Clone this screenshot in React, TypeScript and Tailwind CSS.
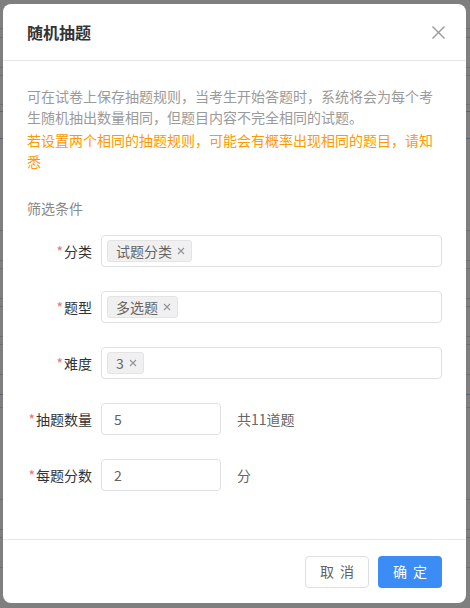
import React from 'react';

const font = { fontFamily: '"Noto Sans CJK SC", "Noto Sans", sans-serif' };

// faint rows of the table that sits behind the overlay
const pageLines = [29, 39, 70, 79, 109, 117, 145, 238, 269, 278, 309, 318, 349, 358, 389, 410, 424, 517, 548, 557, 588];

const Star = () => <span className="text-[#f56c6c] mr-px">*</span>;

const TagClose = () => (
  <svg width="8" height="8" viewBox="0 0 8 8" className="ml-[5px]">
    <path d="M1 1L7 7M7 1L1 7" stroke="#909399" strokeWidth="1.1" />
  </svg>
);

const Tag = ({ text }: { text: string }) => (
  <span className="inline-flex items-center h-[22px] pl-2 pr-[6px] bg-[#f0f0f0] border border-[#e4e4e4] rounded-[3px] text-[14px] text-[#666]">
    {text}
    <TagClose />
  </span>
);

const Row = ({ label, children }: { label: string; children: React.ReactNode }) => (
  <div className="flex items-center">
    <div className="w-[65px] shrink-0 text-right text-[14px] text-[#333]">
      <Star />
      {label}
    </div>
    <div className="ml-[9px] flex-1 flex items-center">{children}</div>
  </div>
);

export default function App() {
  let prev = 0;
  return (
    <div className="relative w-[470px] h-[608px] overflow-hidden bg-white" style={font}>
      {/* page behind */}
      <div className="flex flex-col">
        {pageLines.map((y, i) => {
          const h = y - prev;
          prev = y + 1;
          return (
            <div
              key={i}
              className={`border-b ${y === 410 || y === 145 || y === 117 ? 'border-[#b4c6e6]' : 'border-[#dcdcdc]'}`}
              style={{ height: h }}
            />
          );
        })}
      </div>

      {/* overlay */}
      <div className="absolute inset-0 bg-black/50 flex items-start justify-start pl-[3px] pt-[4px]">
        <div className="w-[463px] h-[599px] bg-white rounded-lg flex flex-col">
          {/* header */}
          <div className="h-[57px] shrink-0 flex items-center justify-between px-6 border-b border-[#e8e8e8]">
            <h2 className="text-[16px] font-bold text-[#333] leading-none">随机抽题</h2>
            <svg width="13" height="13" viewBox="0 0 13 13" className="mr-[-3px]">
              <path d="M0.5 0.5L12.5 12.5M12.5 0.5L0.5 12.5" stroke="#999" strokeWidth="1.4" />
            </svg>
          </div>

          {/* body */}
          <div className="flex-1 px-6 pt-[25px]">
            <p className="text-[14px] leading-[21px] text-[#9a9a9a]">
              可在试卷上保存抽题规则，当考生开始答题时，系统将会为每个考生随机抽出数量相同，但题目内容不完全相同的试题。
            </p>
            <p className="mt-[2px] text-[14px] leading-[21px] text-[#ff9900]">
              若设置两个相同的抽题规则，可能会有概率出现相同的题目，请知悉
            </p>

            <div className="mt-[26px] text-[14px] leading-[21px] text-[#888]">筛选条件</div>

            <div className="mt-[16px] flex flex-col gap-[24px]">
              <Row label="分类">
                <div className="flex-1 h-[32px] border border-[#dcdfe6] rounded flex items-center px-[5px]">
                  <Tag text="试题分类" />
                </div>
              </Row>
              <Row label="题型">
                <div className="flex-1 h-[32px] border border-[#dcdfe6] rounded flex items-center px-[5px]">
                  <Tag text="多选题" />
                </div>
              </Row>
              <Row label="难度">
                <div className="flex-1 h-[32px] border border-[#dcdfe6] rounded flex items-center px-[5px]">
                  <Tag text="3" />
                </div>
              </Row>
              <Row label="抽题数量">
                <div className="w-[120px] h-[32px] border border-[#dcdfe6] rounded flex items-center px-3 text-[14px] text-[#606266]">
                  5
                </div>
                <span className="ml-[16px] text-[14px] text-[#666]">共11道题</span>
              </Row>
              <Row label="每题分数">
                <div className="w-[120px] h-[32px] border border-[#dcdfe6] rounded flex items-center px-3 text-[14px] text-[#606266]">
                  2
                </div>
                <span className="ml-[16px] text-[14px] text-[#666]">分</span>
              </Row>
            </div>
          </div>

          {/* footer */}
          <div className="h-[64px] shrink-0 border-t border-[#e8e8e8] flex items-center justify-end gap-[9px] px-6">
            <button className="w-[64px] h-[32px] border border-[#dcdfe6] rounded text-[14px] text-[#606266] bg-white tracking-[6px] pl-[6px]">
              取消
            </button>
            <button className="w-[64px] h-[32px] rounded text-[14px] text-white bg-[#3c8cf5] tracking-[6px] pl-[6px]">
              确定
            </button>
          </div>
        </div>
      </div>
    </div>
  );
}
